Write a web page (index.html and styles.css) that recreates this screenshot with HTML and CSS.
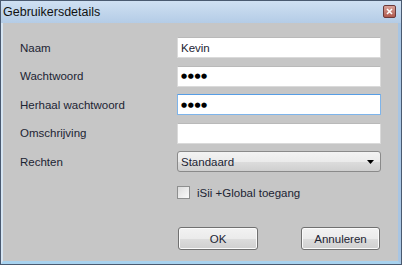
FILE: index.html
```html
<!DOCTYPE html>
<html lang="nl">
<head>
  <meta charset="UTF-8">
  <title>Gebruikersdetails</title>
  <link rel="stylesheet" href="styles.css">
</head>
<body>
  <div class="window">
    <div class="titlebar">
      <span class="title">Gebruikersdetails</span>
      <div class="close">
        <svg width="7" height="7" viewBox="0 0 7 7"><path d="M1 1L6 6M6 1L1 6" stroke="#fff" stroke-width="1.6"/></svg>
      </div>
    </div>

    <div class="content">
      <div class="form">
        <label>Naam</label>
        <div class="field">Kevin</div>

        <label>Wachtwoord</label>
        <div class="field"><span class="dots">●●●●</span></div>

        <label>Herhaal wachtwoord</label>
        <div class="field focus"><span class="dots">●●●●</span></div>

        <label>Omschrijving</label>
        <div class="field"></div>

        <label>Rechten</label>
        <div class="select">
          <span>Standaard</span>
          <svg width="7" height="4" viewBox="0 0 7 4"><path d="M0 0H7L3.5 4Z" fill="#000"/></svg>
        </div>
      </div>

      <div class="check-row">
        <div class="checkbox"></div>
        <span>iSii +Global toegang</span>
      </div>

      <div class="buttons">
        <div class="btn">OK</div>
        <div class="btn">Annuleren</div>
      </div>
    </div>
  </div>
</body>
</html>
```

FILE: styles.css
```css
* {
  box-sizing: border-box;
}

body {
  margin: 0;
  font-family: 'Liberation Sans', Arial, sans-serif;
  font-size: 11.5px;
  color: #1c2433;
}

.window {
  width: 402px;
  height: 265px;
  display: flex;
  flex-direction: column;
  border: 1px solid #4a5a70;
  background: #c6c6c6;
}

.titlebar {
  height: 22px;
  flex-shrink: 0;
  display: flex;
  align-items: center;
  justify-content: space-between;
  padding: 0 5px 0 2px;
  background: linear-gradient(#cfe0f2, #b4cce6);
}

.title {
  font-size: 12.5px;
  color: #111;
}

.close {
  width: 13px;
  height: 13px;
  margin-top: -1px;
  display: flex;
  align-items: center;
  justify-content: center;
  border: 1px solid #6b3a3a;
  border-radius: 2px;
  background: linear-gradient(#d9a39a, #b0594d);
}

.content {
  flex: 1;
  border-left: 2px solid #d6e5f3;
  border-right: 3px solid #a8c5e3;
  border-bottom: 3px solid #a8d2ee;
  padding: 14px 0 0 17px;
}

.form {
  display: grid;
  grid-template-columns: 157px 204px;
  grid-auto-rows: 21px;
  row-gap: 7.5px;
  align-items: center;
}

.field {
  height: 21px;
  background: #fff;
  border: 1px solid #dadada;
  border-top-color: #b9b9b9;
  border-radius: 1px;
  padding: 0 3px;
  display: flex;
  align-items: center;
}

.field.focus {
  border-color: #7eb4ea;
  border-top-color: #569de5;
}

.dots {
  font-family: 'DejaVu Sans', sans-serif;
  font-size: 7px;
  letter-spacing: 0.6px;
  color: #000;
}

.select {
  height: 21px;
  display: flex;
  align-items: center;
  justify-content: space-between;
  padding: 0 6px 0 3px;
  border: 1px solid #8a8a8a;
  border-radius: 3px;
  background: linear-gradient(#f3f3f3 0%, #ebebeb 50%, #dddddd 51%, #cfcfcf 100%);
}

.check-row {
  display: flex;
  align-items: center;
  gap: 7px;
  margin: 14px 0 0 157px;
}

.checkbox {
  width: 13px;
  height: 13px;
  border: 1px solid #8e8f8f;
  background: linear-gradient(135deg, #dcdcdc, #fbfbfb);
}

.buttons {
  display: flex;
  justify-content: space-between;
  width: 202px;
  margin: 28px 0 0 158px;
}

.btn {
  height: 23px;
  display: flex;
  align-items: center;
  justify-content: center;
  border: 1px solid #707070;
  border-radius: 3px;
  background: linear-gradient(#f2f2f2 0%, #ebebeb 50%, #dddddd 51%, #cfcfcf 100%);
  box-shadow: inset 0 0 0 1px #fbfbfb;
}

.btn:first-child {
  width: 80px;
}

.btn:last-child {
  width: 79px;
}
```
